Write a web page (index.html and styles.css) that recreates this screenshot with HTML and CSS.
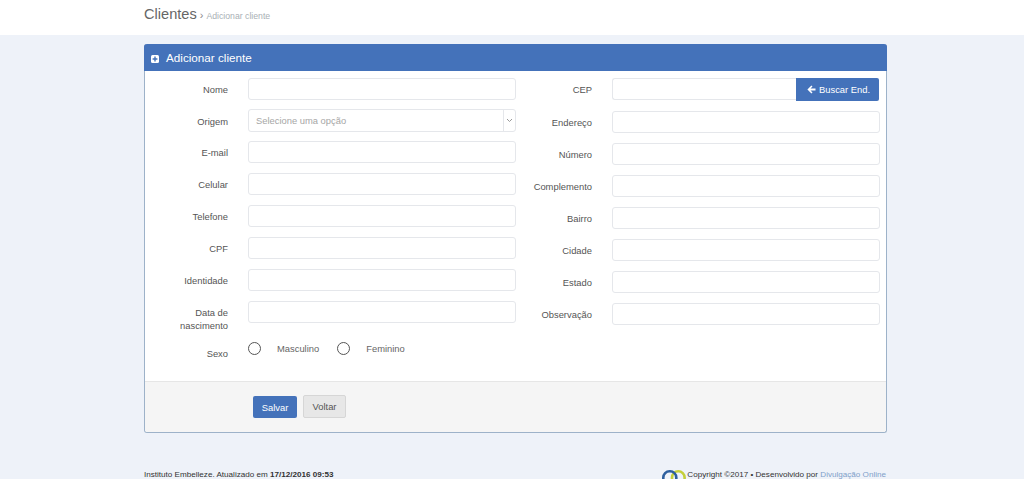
FILE: index.html
```html
<!DOCTYPE html>
<html lang="en">
<head>
    <meta charset="UTF-8">
    <meta name="viewport" content="width=device-width, initial-scale=1.0">
    <title>Adicionar cliente</title>
    <link rel="stylesheet" href="styles.css">
</head>
<body>
    <header class="top-bar">
        <h1 class="page-title">Clientes</h1>
        <span class="crumb-sep">&rsaquo;</span>
        <span class="crumb">Adicionar cliente</span>
    </header>

    <main class="panel">
        <div class="panel-head">
            <svg class="plus-icon" width="8" height="8" viewBox="0 0 8 8">
                <rect width="8" height="8" rx="1.5" fill="#fff"/>
                <path d="M4 1.6v4.8M1.6 4h4.8" stroke="#4472ba" stroke-width="1.4"/>
            </svg>
            <h2 class="panel-title">Adicionar cliente</h2>
        </div>

        <form class="panel-body">
            <div class="col col-left">
                <div class="row"><label class="lbl">Nome</label><input class="field" type="text"></div>
                <div class="row row-select">
                    <label class="lbl">Origem</label>
                    <div class="field select">
                        <span class="select-text">Selecione uma opção</span>
                        <span class="select-arrow">
                            <svg width="7" height="5" viewBox="0 0 7 5"><path d="M1 1l2.5 2.5L6 1" fill="none" stroke="#999" stroke-width="1"/></svg>
                        </span>
                    </div>
                </div>
                <div class="row"><label class="lbl">E-mail</label><input class="field" type="text"></div>
                <div class="row"><label class="lbl">Celular</label><input class="field" type="text"></div>
                <div class="row"><label class="lbl">Telefone</label><input class="field" type="text"></div>
                <div class="row"><label class="lbl">CPF</label><input class="field" type="text"></div>
                <div class="row"><label class="lbl">Identidade</label><input class="field" type="text"></div>
                <div class="row row-tall"><label class="lbl">Data de nascimento</label><input class="field" type="text"></div>
                <div class="row row-radio">
                    <label class="lbl">Sexo</label>
                    <div class="radios">
                        <span class="radio"></span><span class="radio-text">Masculino</span>
                        <span class="radio"></span><span class="radio-text">Feminino</span>
                    </div>
                </div>
            </div>

            <div class="col col-right">
                <div class="row row-cep">
                    <label class="lbl">CEP</label>
                    <div class="input-group">
                        <input class="field" type="text">
                        <button class="btn btn-blue btn-search" type="button">
                            <svg width="9" height="9" viewBox="0 0 9 9"><path d="M4.4.4L.4 4.5l4 4.1 1.1-1.1-2-2h5V3.5h-5l2-2z" fill="#fff"/></svg>
                            Buscar End.
                        </button>
                    </div>
                </div>
                <div class="row"><label class="lbl">Endereço</label><input class="field" type="text"></div>
                <div class="row"><label class="lbl">Número</label><input class="field" type="text"></div>
                <div class="row"><label class="lbl">Complemento</label><input class="field" type="text"></div>
                <div class="row"><label class="lbl">Bairro</label><input class="field" type="text"></div>
                <div class="row"><label class="lbl">Cidade</label><input class="field" type="text"></div>
                <div class="row"><label class="lbl">Estado</label><input class="field" type="text"></div>
                <div class="row"><label class="lbl">Observação</label><input class="field" type="text"></div>
            </div>
        </form>

        <div class="panel-foot">
            <button class="btn btn-blue btn-save" type="button">Salvar</button>
            <button class="btn btn-grey" type="button">Voltar</button>
        </div>
    </main>

    <footer class="page-foot">
        <p class="foot-left">Instituto Embelleze. Atualizado em <b>17/12/2016 09:53</b></p>
        <p class="foot-right">
            <svg class="logo" width="24" height="10" viewBox="0 0 24 10">
                <rect x="10" y="1.3" width="12.6" height="14" rx="6.3" fill="none" stroke="#c4cf3a" stroke-width="2.6"/>
                <rect x="1.3" y="1.3" width="13" height="14" rx="6.3" fill="none" stroke="#2d5f9e" stroke-width="2.6"/>
            </svg>
            <span>Copyright ©2017 • Desenvolvido por <a class="foot-link" href="#">Divulgação Online</a></span>
        </p>
    </footer>
</body>
</html>
```

FILE: styles.css
```css
html, body { height: 479px; overflow: hidden; }
body { margin: 0; background-color: #eef2f9; font-family: "Liberation Sans", Arial, sans-serif; font-size: 9.4px; color: #555; }

.top-bar { height: 35px; padding: 6px 0 0 144px; background: #fff; display: flex; align-items: baseline; box-sizing: border-box; }
.page-title { margin: 0; font-size: 14.6px; font-weight: normal; color: #666; }
.crumb-sep { margin: 0 3px; font-size: 11px; color: #888; }
.crumb { font-size: 8.7px; color: #a9b0b5; }

.panel { width: 741px; height: 388px; margin: 9px 0 0 144px; background: #fff; border: 1px solid #9db2c9; border-top: 0; border-radius: 3px; display: flex; flex-direction: column; }
.panel-head { height: 27px; margin: 0 -1px; padding-left: 7px; background: #4472ba; border-radius: 3px 3px 0 0; display: flex; align-items: center; }
.plus-icon { margin: 2px 7px 0 0; }
.panel-title { margin: 0; font-size: 11.7px; font-weight: normal; color: #fff; }

.panel-body { flex: 1; display: flex; }
.col { width: 371px; padding-top: 7px; box-sizing: border-box; }
.col-right { width: 364px; }

.row { display: flex; height: 32px; }
.row-select { height: 31px; }
.row-cep { height: 33px; }
.row-tall { height: 46px; }
.lbl { width: 83px; margin-right: 20px; padding-top: 5px; text-align: right; line-height: 13px; flex: none; }
.col-right .lbl { width: 76px; }
.row-radio .lbl { padding-top: 0; }

.field { width: 268px; height: 22px; box-sizing: border-box; border: 1px solid #e5e7eb; border-radius: 3px; background: #fff; padding: 0; outline: none; }
.select { height: 23px; margin-top: -1px; display: flex; align-items: center; color: #a6a6a6; }
.select-text { flex: 1; padding-left: 7px; }
.select-arrow { width: 11px; height: 100%; border-left: 1px solid #e5e7eb; display: flex; align-items: center; justify-content: center; }

.radios { display: flex; align-items: center; height: 14px; margin-top: -6px; }
.radio { width: 11px; height: 11px; border: 1px solid #555; border-radius: 50%; flex: none; }
.radio-text { margin: 1px 18px 0 16px; color: #666; }

.input-group { display: flex; width: 267px; height: 23px; }
.input-group .field { flex: 1; width: auto; height: 22px; border-right: 0; border-radius: 3px 0 0 3px; }

.btn { border: none; border-radius: 2px; font-family: inherit; font-size: 9.4px; padding: 0; cursor: pointer; }
.btn-blue { background-color: #4472ba; color: #fff; }
.btn-grey { width: 43px; height: 23px; margin-top: -1px; background-color: #e7e7e7; border: 1px solid #d6d6d6; color: #555; }
.btn-search { width: 83px; height: 23px; padding-left: 11px; flex: none; border-radius: 0 2px 2px 0; display: flex; align-items: center; gap: 3px; }
.btn-save { width: 44px; height: 22px; margin-right: 6px; }

.panel-foot { height: 51px; padding: 14px 0 0 108px; background: #f5f5f5; border-top: 1px solid #e6e6e6; border-radius: 0 0 3px 3px; box-sizing: border-box; display: flex; align-items: flex-start; }

.page-foot { width: 742px; margin: 37px 0 0 144px; display: flex; justify-content: space-between; font-size: 8.1px; color: #333; }
.page-foot p { margin: 0; }
.foot-right { display: flex; align-items: center; gap: 1px; }
.logo { margin: -6px 0; }
.foot-link { color: #7f9fc9; text-decoration: none; }
```
